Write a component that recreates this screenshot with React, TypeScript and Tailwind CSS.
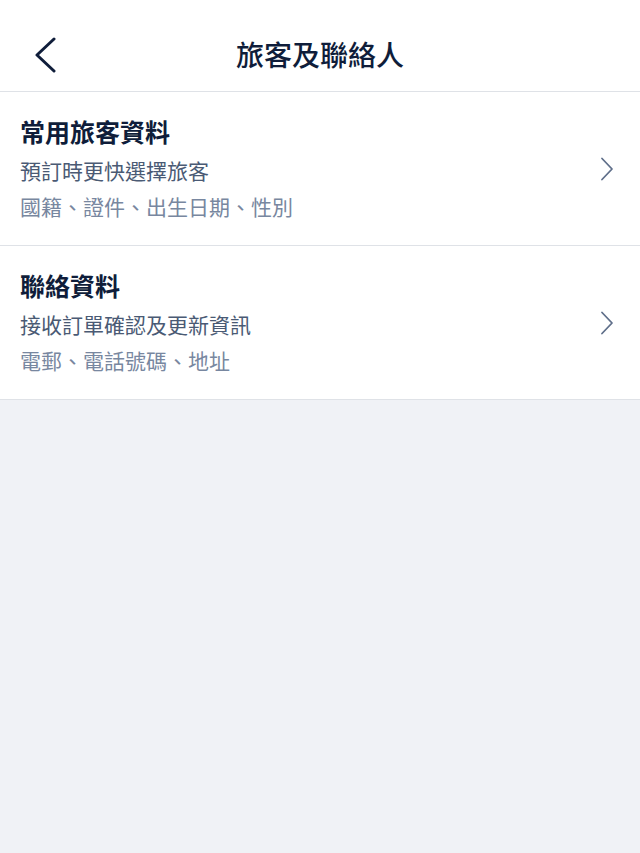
const ROWS = [
  {
    title: "常用旅客資料",
    desc: "預訂時更快選擇旅客",
    hint: "國籍、證件、出生日期、性別",
  },
  {
    title: "聯絡資料",
    desc: "接收訂單確認及更新資訊",
    hint: "電郵、電話號碼、地址",
  },
];

function Chevron() {
  return (
    <svg width="14" height="24" viewBox="0 0 14 24" fill="none" className="shrink-0">
      <path d="M2 1.5 L12 12 L2 22.5" stroke="#5f6f8a" strokeWidth="1.8" strokeLinecap="round" strokeLinejoin="round" />
    </svg>
  );
}

function BackChevron() {
  return (
    <svg width="24" height="36" viewBox="0 0 24 36" fill="none">
      <path d="M20 2 L3 18 L20 34" stroke="#0f1d3a" strokeWidth="3" strokeLinecap="round" strokeLinejoin="round" />
    </svg>
  );
}

export default function App() {
  return (
    <div
      className="min-h-[853px] bg-[#f0f2f6]"
      style={{ fontFamily: '"Noto Sans CJK TC", "Noto Sans", sans-serif' }}
    >
      <header className="relative h-[92px] border-b border-[#dfe2e7] bg-white pt-[35px]">
        <button className="absolute left-[34px] top-[37px]">
          <BackChevron />
        </button>
        <h1 className="text-center text-[28px] font-medium leading-[38px] text-[#0f1d3a]">
          旅客及聯絡人
        </h1>
      </header>

      <ul className="bg-white">
        {ROWS.map((r) => (
          <li
            key={r.title}
            className="flex items-center justify-between border-b border-[#dfe2e7] pl-[20px] pr-[26px] pt-[21px] pb-[21px]"
          >
            <div>
              <div className="mb-[3px] text-[25px] font-semibold leading-[36px] text-[#0f1d3a]">{r.title}</div>
              <div className="text-[21px] leading-[36px] text-[#4a5a74]">{r.desc}</div>
              <div className="text-[21px] leading-[36px] text-[#7887a0]">{r.hint}</div>
            </div>
            <Chevron />
          </li>
        ))}
      </ul>
    </div>
  );
}
